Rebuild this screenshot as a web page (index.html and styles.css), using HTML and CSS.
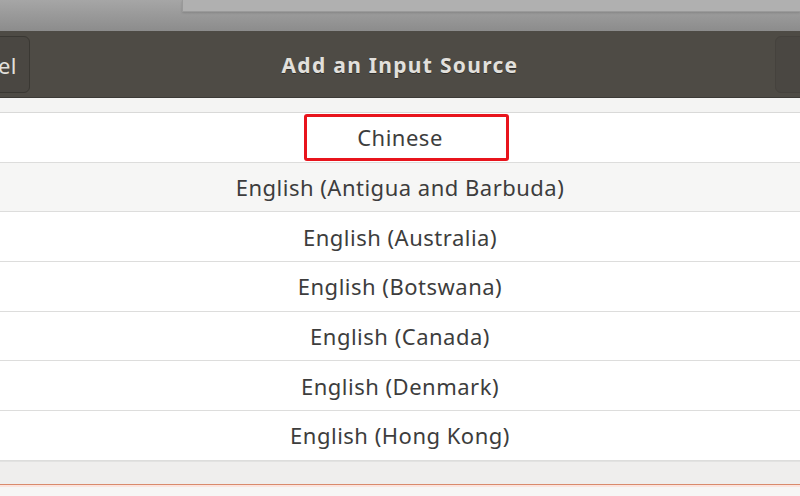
FILE: index.html
```html
<!DOCTYPE html>
<html lang="en">
<head>
    <meta charset="UTF-8">
    <meta name="viewport" content="width=device-width, initial-scale=1.0">
    <title>Add an Input Source</title>
    <link rel="stylesheet" href="styles.css">
</head>
<body>
    <div class="backdrop">
        <div class="backdrop-box"></div>
    </div>
    <header class="titlebar">
        <button class="hb-button cancel">Cancel</button>
        <h1>Add an Input Source</h1>
        <button class="hb-button add"></button>
    </header>
    <div class="gap-strip"></div>
    <ul class="source-list">
        <li class="row"><span class="label selected">Chinese</span></li>
        <li class="row alt"><span class="label">English (Antigua and Barbuda)</span></li>
        <li class="row"><span class="label">English (Australia)</span></li>
        <li class="row"><span class="label">English (Botswana)</span></li>
        <li class="row"><span class="label">English (Canada)</span></li>
        <li class="row"><span class="label">English (Denmark)</span></li>
        <li class="row"><span class="label">English (Hong Kong)</span></li>
    </ul>
    <div class="list-foot"></div>
    <div class="accent-line"></div>
</body>
</html>
```

FILE: styles.css
```css
body {
    margin: 0;
    padding: 0;
    width: 800px;
    height: 496px;
    overflow: hidden;
    background: #f6f6f5;
    font-family: "Noto Sans", "DejaVu Sans", sans-serif;
    color: #3d3d3d;
}
.backdrop {
    height: 31px;
    background: linear-gradient(#a6a6a6, #8c8c8c);
    position: relative;
}
.backdrop-box {
    position: absolute;
    left: 182px;
    right: 0;
    top: 0;
    height: 11px;
    background: #b0b0b0;
    border-left: 1px solid #999;
    border-bottom: 1px solid #9a9a9a;
    box-shadow: 0 1px 2px rgba(0,0,0,0.15);
}
.titlebar {
    height: 66px;
    background: #4e4b45;
    border-bottom: 1px solid #3c3a36;
    position: relative;
    display: flex;
    align-items: center;
    justify-content: center;
}
.titlebar h1 {
    margin: 0;
    padding-top: 2px;
    font-size: 21px;
    font-weight: bold;
    color: #e2e0dc;
    letter-spacing: 1.3px;
    text-shadow: 0 1px 0 rgba(0,0,0,0.4);
}
.hb-button {
    position: absolute;
    top: 5px;
    height: 57px;
    background: #4a4742;
    border: 1px solid #3a3833;
    border-radius: 6px;
    color: #e2e0dc;
    font-family: inherit;
    font-size: 22px;
    letter-spacing: 0.5px;
    padding: 0 12px;
}
.cancel {
    right: 770px;
}
.add {
    left: 775px;
    width: 80px;
    border-color: #45423d;
}
.gap-strip {
    height: 14px;
    background: #f4f4f3;
    border-bottom: 1px solid #d9d9d8;
}
.source-list {
    list-style: none;
    margin: 0;
    padding: 0;
}
.row {
    height: 48.7px;
    border-bottom: 1px solid #dddddc;
    background: #ffffff;
    display: flex;
    align-items: center;
    justify-content: center;
    font-size: 22px;
    letter-spacing: 0.5px;
}
.row.alt {
    background: #f6f6f5;
}
.label {
    line-height: 1;
}
.label.selected {
    box-sizing: border-box;
    width: 205px;
    height: 47px;
    margin-left: 12px;
    padding-right: 12px;
    border: 3px solid #e8141c;
    border-radius: 3px;
    display: flex;
    align-items: center;
    justify-content: center;
}
.list-foot {
    height: 22px;
    background: #efeeed;
    border-top: 1px solid #e2e2e1;
}
.accent-line {
    height: 1px;
    background: #d98a6c;
    border-bottom: 2px solid #fbe4de;
}
```
